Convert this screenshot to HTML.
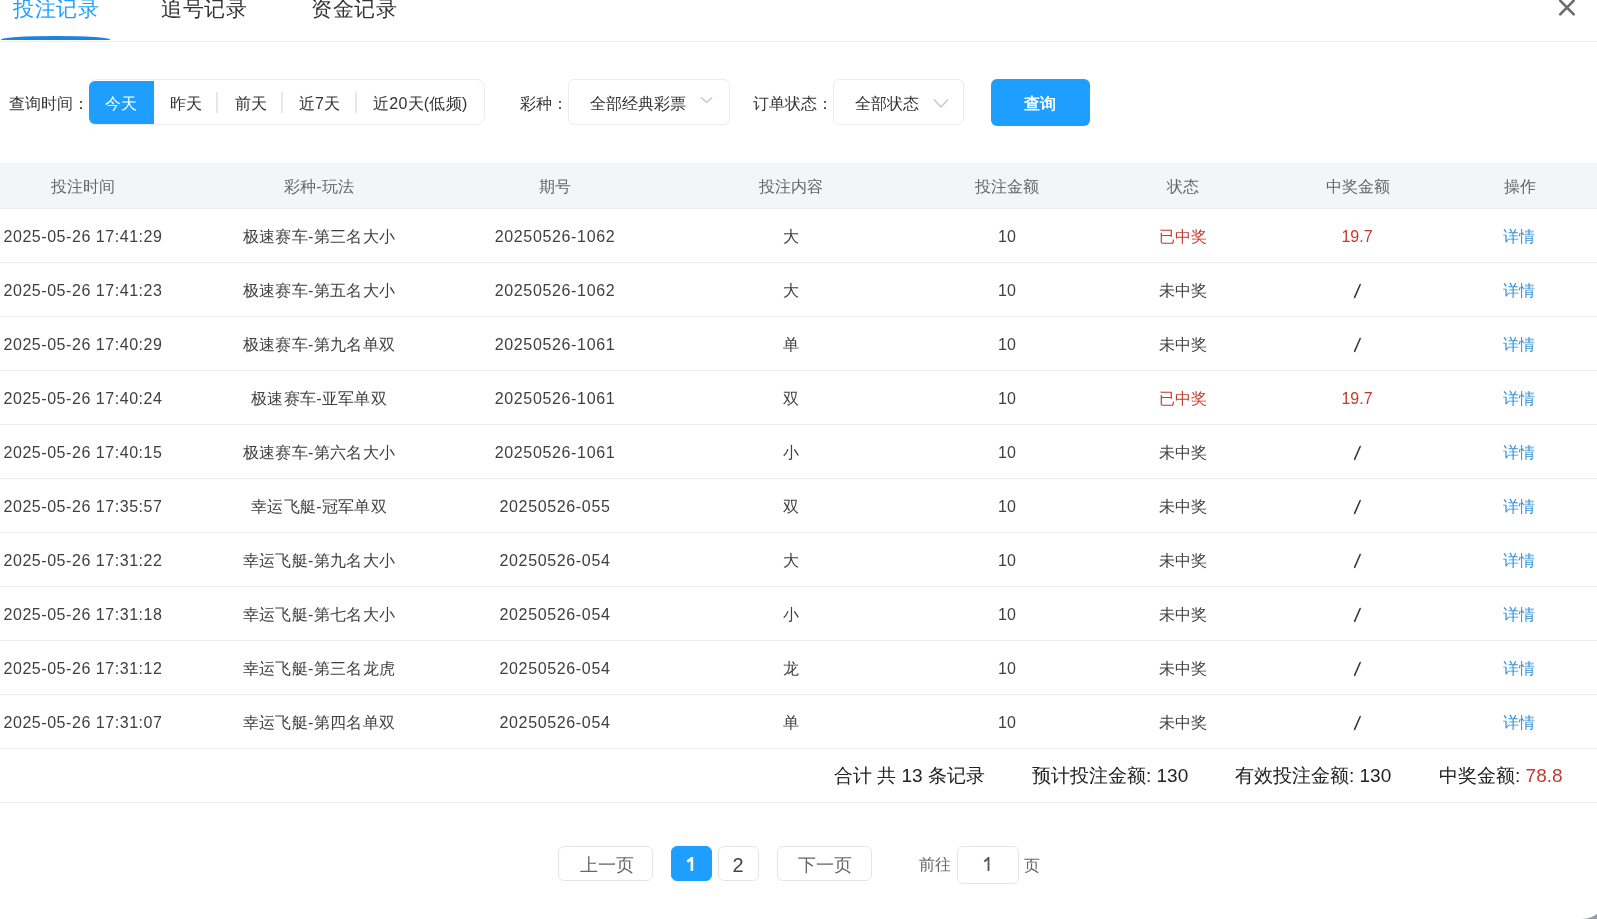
<!DOCTYPE html>
<html><head><meta charset="utf-8">
<style>
html,body{margin:0;padding:0;}
body{width:1597px;height:919px;overflow:hidden;position:relative;background:#979ba8;font-family:"Liberation Sans",sans-serif;color:#333;}
#dlg{position:absolute;left:0;top:-10px;width:1606px;height:929px;background:#fff;border-bottom-right-radius:24px;}
#wrap{position:absolute;left:0;top:0;width:1597px;height:919px;will-change:transform;}
.a{position:absolute;white-space:nowrap;}
.c{position:absolute;white-space:nowrap;text-align:center;width:300px;}
.tab{font-size:21px;top:-6.5px;letter-spacing:0.6px;line-height:30px;color:#333;}
.tab.on{color:#1e9fff;}
#uline{position:absolute;left:1px;top:36px;width:109px;height:3.5px;background:#1a85df;border-radius:50% 50% 0 0 / 100% 100% 0 0;}
#divider{position:absolute;left:0;top:41px;width:1597px;height:1px;background:#eeeeee;}
.lbl{font-size:16px;top:93px;line-height:22px;color:#333;}
#grp{position:absolute;left:89px;top:79px;width:394px;height:44px;border:1px solid #ececec;border-radius:8px;}
#today{position:absolute;left:89px;top:81px;width:65px;height:43px;background:#1e9fff;border-radius:6px 0 0 6px;}
.seg{font-size:16px;top:93px;line-height:22px;color:#333;}
.sep{position:absolute;top:92px;width:2px;height:21px;background:#e8e8e8;}
.sel{position:absolute;top:79px;height:44px;border:1px solid #ebecef;border-radius:6px;background:#fff;}
.chev{position:absolute;}
#qbtn{position:absolute;left:991px;top:79px;width:99px;height:47px;background:#1e9fff;border-radius:6px;}
#thead{position:absolute;left:0;top:163px;width:1597px;height:45px;background:#f4f5f7;border-bottom:1px solid #ebecef;}
.th{font-size:16px;line-height:22px;color:#666;top:176px;}
.row{position:absolute;left:0;width:1597px;height:53px;border-bottom:1px solid #ebecef;}
.td{font-size:16px;line-height:22px;color:#404040;}
.red{color:#c33b2e;}
.lnk{color:#3193da;}
.sum{font-size:19px;line-height:24px;color:#222;top:764px;}
.pbtn{position:absolute;top:846px;height:33px;border:1px solid #e3e5ea;border-radius:6px;background:#fff;}
.ptxt{font-size:18px;line-height:24px;color:#666;top:853px;}
</style></head><body>
<div id="dlg"></div>
<div id="wrap">
<div class="a tab on" style="left:13px">投注记录</div>
<div class="a tab" style="left:161px">追号记录</div>
<div class="a tab" style="left:311px">资金记录</div>
<div id="uline"></div>
<div id="divider"></div>
<svg class="a" style="left:1557px;top:-3px" width="20" height="20" viewBox="0 0 20 20"><path d="M3.2 3.7 L16.7 17.3 M16.7 3.7 L3.2 17.3" stroke="#6b6b6b" stroke-width="2.6" stroke-linecap="round" fill="none"/></svg>
<div class="a lbl" style="left:9px">查询时间：</div>
<div id="grp"></div>
<div id="today"></div>
<div class="a seg" style="left:105px;color:#fff">今天</div>
<div class="a seg" style="left:170px">昨天</div>
<div class="sep" style="left:216px"></div>
<div class="a seg" style="left:235px">前天</div>
<div class="sep" style="left:281px"></div>
<div class="a seg" style="left:299px">近7天</div>
<div class="sep" style="left:355px"></div>
<div class="a seg" style="left:373px;letter-spacing:0.25px">近20天(低频)</div>
<div class="a lbl" style="left:520px">彩种：</div>
<div class="sel" style="left:568px;width:160px"></div>
<div class="a lbl" style="left:590px">全部经典彩票</div>
<svg class="chev" style="left:700px;top:95px" width="14" height="10" viewBox="0 0 14 10"><path d="M1 2.4 L6.6 7.4 L12.2 2.4" stroke="#c4c6cc" stroke-width="1.4" fill="none"/></svg>
<div class="a lbl" style="left:753px">订单状态：</div>
<div class="sel" style="left:833px;width:129px"></div>
<div class="a lbl" style="left:855px">全部状态</div>
<svg class="chev" style="left:933px;top:98px" width="16" height="11" viewBox="0 0 16 11"><path d="M1 1.5 L8 9 L15 1.5" stroke="#c4c6cc" stroke-width="1.4" fill="none"/></svg>
<div id="qbtn"></div>
<div class="a lbl" style="left:1024px;color:#fff;font-weight:bold">查询</div>
<div id="thead"></div>
<div class="c th" style="left:-67px">投注时间</div>
<div class="c th" style="left:169px">彩种-玩法</div>
<div class="c th" style="left:405px">期号</div>
<div class="c th" style="left:641px">投注内容</div>
<div class="c th" style="left:857px">投注金额</div>
<div class="c th" style="left:1033px">状态</div>
<div class="c th" style="left:1208px">中奖金额</div>
<div class="c th" style="left:1370px">操作</div>
<div class="row" style="top:209px"></div>
<div class="c td" style="left:-67px;top:226px;letter-spacing:0.55px">2025-05-26 17:41:29</div>
<div class="c td" style="left:169px;top:226px;letter-spacing:0.3px">极速赛车-第三名大小</div>
<div class="c td" style="left:405px;top:226px;letter-spacing:0.65px">20250526-1062</div>
<div class="c td" style="left:641px;top:226px">大</div>
<div class="c td" style="left:857px;top:226px">10</div>
<div class="c td red" style="left:1033px;top:226px">已中奖</div>
<div class="c td red" style="left:1207px;top:226px">19.7</div>
<div class="c td lnk" style="left:1369px;top:226px">详情</div>
<div class="row" style="top:263px"></div>
<div class="c td" style="left:-67px;top:280px;letter-spacing:0.55px">2025-05-26 17:41:23</div>
<div class="c td" style="left:169px;top:280px;letter-spacing:0.3px">极速赛车-第五名大小</div>
<div class="c td" style="left:405px;top:280px;letter-spacing:0.65px">20250526-1062</div>
<div class="c td" style="left:641px;top:280px">大</div>
<div class="c td" style="left:857px;top:280px">10</div>
<div class="c td" style="left:1033px;top:280px">未中奖</div>
<svg class="a" style="left:1350px;top:278px" width="16" height="24" viewBox="1350 278 16 24"><path d="M1360.2 284.5 L1354.6 297.4" stroke="#333" stroke-width="1.5" stroke-linecap="round" fill="none"/></svg>
<div class="c td lnk" style="left:1369px;top:280px">详情</div>
<div class="row" style="top:317px"></div>
<div class="c td" style="left:-67px;top:334px;letter-spacing:0.55px">2025-05-26 17:40:29</div>
<div class="c td" style="left:169px;top:334px;letter-spacing:0.3px">极速赛车-第九名单双</div>
<div class="c td" style="left:405px;top:334px;letter-spacing:0.65px">20250526-1061</div>
<div class="c td" style="left:641px;top:334px">单</div>
<div class="c td" style="left:857px;top:334px">10</div>
<div class="c td" style="left:1033px;top:334px">未中奖</div>
<svg class="a" style="left:1350px;top:332px" width="16" height="24" viewBox="1350 332 16 24"><path d="M1360.2 338.5 L1354.6 351.4" stroke="#333" stroke-width="1.5" stroke-linecap="round" fill="none"/></svg>
<div class="c td lnk" style="left:1369px;top:334px">详情</div>
<div class="row" style="top:371px"></div>
<div class="c td" style="left:-67px;top:388px;letter-spacing:0.55px">2025-05-26 17:40:24</div>
<div class="c td" style="left:169px;top:388px;letter-spacing:0.3px">极速赛车-亚军单双</div>
<div class="c td" style="left:405px;top:388px;letter-spacing:0.65px">20250526-1061</div>
<div class="c td" style="left:641px;top:388px">双</div>
<div class="c td" style="left:857px;top:388px">10</div>
<div class="c td red" style="left:1033px;top:388px">已中奖</div>
<div class="c td red" style="left:1207px;top:388px">19.7</div>
<div class="c td lnk" style="left:1369px;top:388px">详情</div>
<div class="row" style="top:425px"></div>
<div class="c td" style="left:-67px;top:442px;letter-spacing:0.55px">2025-05-26 17:40:15</div>
<div class="c td" style="left:169px;top:442px;letter-spacing:0.3px">极速赛车-第六名大小</div>
<div class="c td" style="left:405px;top:442px;letter-spacing:0.65px">20250526-1061</div>
<div class="c td" style="left:641px;top:442px">小</div>
<div class="c td" style="left:857px;top:442px">10</div>
<div class="c td" style="left:1033px;top:442px">未中奖</div>
<svg class="a" style="left:1350px;top:440px" width="16" height="24" viewBox="1350 440 16 24"><path d="M1360.2 446.5 L1354.6 459.4" stroke="#333" stroke-width="1.5" stroke-linecap="round" fill="none"/></svg>
<div class="c td lnk" style="left:1369px;top:442px">详情</div>
<div class="row" style="top:479px"></div>
<div class="c td" style="left:-67px;top:496px;letter-spacing:0.55px">2025-05-26 17:35:57</div>
<div class="c td" style="left:169px;top:496px;letter-spacing:0.3px">幸运飞艇-冠军单双</div>
<div class="c td" style="left:405px;top:496px;letter-spacing:0.65px">20250526-055</div>
<div class="c td" style="left:641px;top:496px">双</div>
<div class="c td" style="left:857px;top:496px">10</div>
<div class="c td" style="left:1033px;top:496px">未中奖</div>
<svg class="a" style="left:1350px;top:494px" width="16" height="24" viewBox="1350 494 16 24"><path d="M1360.2 500.5 L1354.6 513.4" stroke="#333" stroke-width="1.5" stroke-linecap="round" fill="none"/></svg>
<div class="c td lnk" style="left:1369px;top:496px">详情</div>
<div class="row" style="top:533px"></div>
<div class="c td" style="left:-67px;top:550px;letter-spacing:0.55px">2025-05-26 17:31:22</div>
<div class="c td" style="left:169px;top:550px;letter-spacing:0.3px">幸运飞艇-第九名大小</div>
<div class="c td" style="left:405px;top:550px;letter-spacing:0.65px">20250526-054</div>
<div class="c td" style="left:641px;top:550px">大</div>
<div class="c td" style="left:857px;top:550px">10</div>
<div class="c td" style="left:1033px;top:550px">未中奖</div>
<svg class="a" style="left:1350px;top:548px" width="16" height="24" viewBox="1350 548 16 24"><path d="M1360.2 554.5 L1354.6 567.4" stroke="#333" stroke-width="1.5" stroke-linecap="round" fill="none"/></svg>
<div class="c td lnk" style="left:1369px;top:550px">详情</div>
<div class="row" style="top:587px"></div>
<div class="c td" style="left:-67px;top:604px;letter-spacing:0.55px">2025-05-26 17:31:18</div>
<div class="c td" style="left:169px;top:604px;letter-spacing:0.3px">幸运飞艇-第七名大小</div>
<div class="c td" style="left:405px;top:604px;letter-spacing:0.65px">20250526-054</div>
<div class="c td" style="left:641px;top:604px">小</div>
<div class="c td" style="left:857px;top:604px">10</div>
<div class="c td" style="left:1033px;top:604px">未中奖</div>
<svg class="a" style="left:1350px;top:602px" width="16" height="24" viewBox="1350 602 16 24"><path d="M1360.2 608.5 L1354.6 621.4" stroke="#333" stroke-width="1.5" stroke-linecap="round" fill="none"/></svg>
<div class="c td lnk" style="left:1369px;top:604px">详情</div>
<div class="row" style="top:641px"></div>
<div class="c td" style="left:-67px;top:658px;letter-spacing:0.55px">2025-05-26 17:31:12</div>
<div class="c td" style="left:169px;top:658px;letter-spacing:0.3px">幸运飞艇-第三名龙虎</div>
<div class="c td" style="left:405px;top:658px;letter-spacing:0.65px">20250526-054</div>
<div class="c td" style="left:641px;top:658px">龙</div>
<div class="c td" style="left:857px;top:658px">10</div>
<div class="c td" style="left:1033px;top:658px">未中奖</div>
<svg class="a" style="left:1350px;top:656px" width="16" height="24" viewBox="1350 656 16 24"><path d="M1360.2 662.5 L1354.6 675.4" stroke="#333" stroke-width="1.5" stroke-linecap="round" fill="none"/></svg>
<div class="c td lnk" style="left:1369px;top:658px">详情</div>
<div class="row" style="top:695px"></div>
<div class="c td" style="left:-67px;top:712px;letter-spacing:0.55px">2025-05-26 17:31:07</div>
<div class="c td" style="left:169px;top:712px;letter-spacing:0.3px">幸运飞艇-第四名单双</div>
<div class="c td" style="left:405px;top:712px;letter-spacing:0.65px">20250526-054</div>
<div class="c td" style="left:641px;top:712px">单</div>
<div class="c td" style="left:857px;top:712px">10</div>
<div class="c td" style="left:1033px;top:712px">未中奖</div>
<svg class="a" style="left:1350px;top:710px" width="16" height="24" viewBox="1350 710 16 24"><path d="M1360.2 716.5 L1354.6 729.4" stroke="#333" stroke-width="1.5" stroke-linecap="round" fill="none"/></svg>
<div class="c td lnk" style="left:1369px;top:712px">详情</div>
<div class="row" style="top:749px"></div>
<div class="a sum" style="left:834px">合计 共 13 条记录</div>
<div class="a sum" style="left:1032px">预计投注金额: 130</div>
<div class="a sum" style="left:1235px">有效投注金额: 130</div>
<div class="a sum" style="left:1439px">中奖金额: <span class="red">78.8</span></div>
<div class="pbtn" style="left:558px;width:93px"></div>
<div class="a ptxt" style="left:580px">上一页</div>
<div class="pbtn" style="left:671px;width:39px;background:#1e9fff;border-color:#1e9fff"></div>
<svg class="a" style="left:680px;top:850px" width="24" height="26" viewBox="680 850 24 26"><path d="M687.3 861.6 L691.8 858.2 M691.9 857 L691.9 871" stroke="#fff" stroke-width="2.6" fill="none"/></svg>
<div class="pbtn" style="left:718px;width:39px"></div>
<div class="c ptxt" style="left:588px;font-size:20px;color:#444">2</div>
<div class="pbtn" style="left:777px;width:93px"></div>
<div class="a ptxt" style="left:798px">下一页</div>
<div class="a" style="left:919px;top:854px;font-size:16px;line-height:22px;color:#666">前往</div>
<div class="pbtn" style="left:957px;width:60px;height:36px"></div>
<svg class="a" style="left:975px;top:850px" width="24" height="26" viewBox="975 850 24 26"><path d="M984.3 861.5 L988.3 858.2 M988.5 857 L988.5 871" stroke="#555" stroke-width="1.8" fill="none"/></svg>
<div class="a" style="left:1024px;top:855px;font-size:16px;line-height:22px;color:#666">页</div>
</div>
</body></html>
